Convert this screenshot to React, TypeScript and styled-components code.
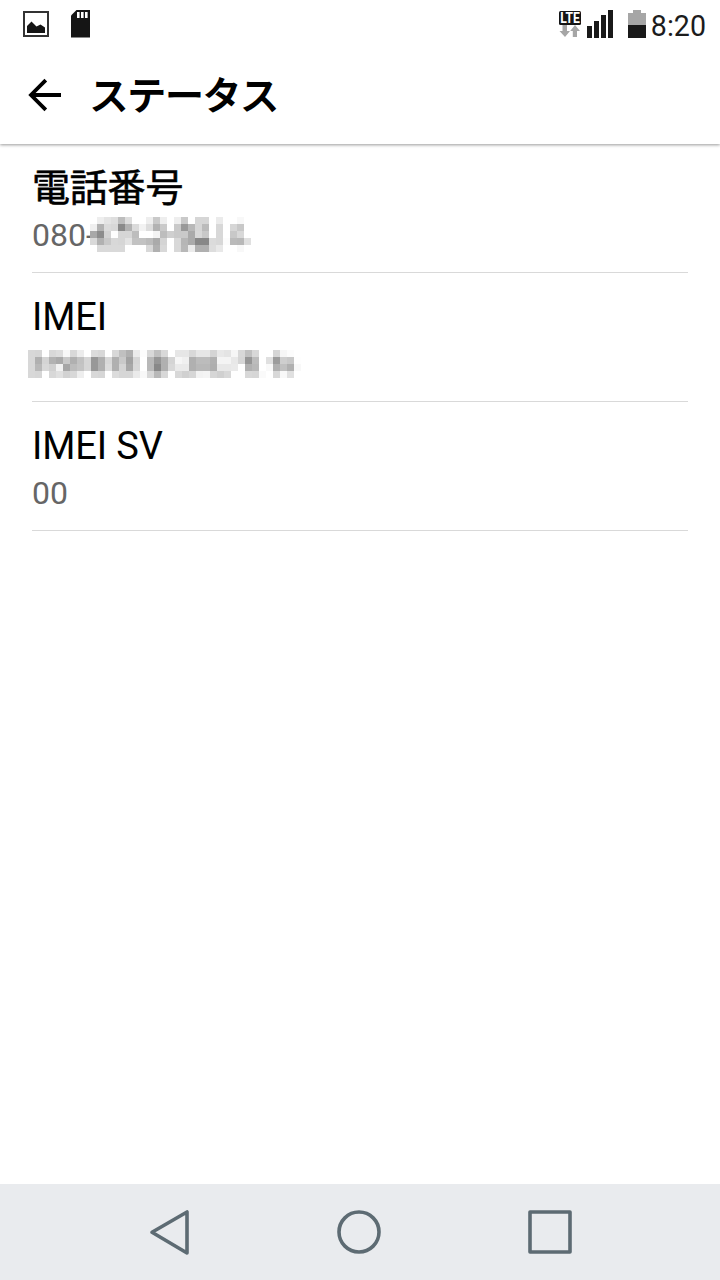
import React from "react";
import styled, { createGlobalStyle } from "styled-components";

const GlobalStyle = createGlobalStyle`
  * { box-sizing: border-box; }
  body { margin: 0; background: #fff; }
`;

const Screen = styled.div`
  display: flex;
  flex-direction: column;
  width: 720px;
  height: 1280px;
  overflow: hidden;
  background: #fff;
  font-family: Roboto, "Noto Sans CJK JP", sans-serif;
  color: #000;
`;

const TopArea = styled.header`
  flex: none;
  height: 144px;
  background: #fff;
  box-shadow: 0 1px 3px rgba(0, 0, 0, 0.4);
`;

const StatusBar = styled.div`
  display: flex;
  justify-content: space-between;
  height: 48px;
  padding: 0 14px 0 22px;
`;

const StatusGroup = styled.div`
  display: flex;
  align-items: flex-start;
`;

const Clock = styled.time`
  margin-left: 3px;
  font-size: 28.6px;
  line-height: 34px;
  padding-top: 9px;
  color: #1c1c1c;
`;

const TitleBar = styled.div`
  display: flex;
  align-items: center;
  height: 96px;
  padding: 0 0 2px 28px;
`;

const Title = styled.h1`
  margin: 2px 0 0 28px;
  font-size: 38px;
  line-height: 48px;
  font-weight: 400;
  letter-spacing: -0.3px;
  -webkit-text-stroke: 1.8px #000;
  stroke-linejoin: round;
`;

const List = styled.main`
  flex: 1;
  padding: 0 32px;
`;

const Row = styled.section`
  height: 129px;
  padding-top: 21px;
  border-bottom: 1px solid #d9d9d9;
`;

const RowTitle = styled.div<{ $cjk?: boolean }>`
  height: 48px;
  font-size: 38px;
  line-height: 46px;
  letter-spacing: ${(p) => (p.$cjk ? "-0.2px" : "-0.1px")};
  -webkit-text-stroke: ${(p) => (p.$cjk ? "0.6px #000" : "0")};
`;

const RowValue = styled.div`
  display: flex;
  height: 44px;
  font-size: 32px;
  line-height: 44px;
  color: #666;
`;

const MosaicSvg = styled.svg<{ $left: number; $top: number }>`
  flex: none;
  display: block;
  margin-left: ${(p) => p.$left}px;
  margin-top: ${(p) => p.$top}px;
`;

const NavBar = styled.nav`
  flex: none;
  display: flex;
  align-items: center;
  height: 96px;
  padding-left: 148px;
  background: #e9ebee;
`;

const NavIcon = styled.svg<{ $gap?: number }>`
  display: block;
  margin-left: ${(p) => p.$gap ?? 0}px;
  fill: none;
  stroke: #5d6b73;
  stroke-width: 3.6;
  stroke-linejoin: round;
`;

const CELL = 7;

const phoneCells = [
  "ff ff ee e4 de bd dd ff ff ee c9 ee ff ee c9 ff d6 d6 ff eb ff ff f8 ff",
  "ff ef b2 db d8 8a b2 db f2 dd b2 ca ff c9 99 b8 d6 bb ff d8 ff d6 c8 ff",
  "ff a8 8c d3 fe d6 d6 bd ff ff f3 bd cf c9 c9 aa d8 c9 ff d8 ff c8 d8 ff",
  "ff d9 b1 c8 d8 d6 e3 c2 c2 bb aa d4 ff d8 b6 aa 88 88 db d8 fc ba b8 e0",
  "ff ff d9 d9 d9 d9 ff ff ff d8 b0 d8 ff d8 b8 eb b0 b0 dd e8 ff ff f8 ff",
];

const imeiCells = [
  "d8 d6 ff d8 dd f8 d8 ec ff dc d8 ff d8 c0 b0 eb fc d8 c0 d8 ff e6 e6 d8 e6 e6 d4 e8 e4 f6 d8 c0 d8 ff ff d6 f6 fc ff",
  "d8 b0 d4 b2 aa c9 b0 c2 d6 98 b0 d8 b0 c9 a2 d6 ff b8 96 b0 d4 f6 f0 b0 bc bc b0 f4 f4 e8 d6 96 bc ff e0 9c ce c8 fe",
  "d8 b8 d8 d0 f2 a6 bc c4 d6 98 b0 dc b0 d4 a8 d8 ff b8 88 b0 d8 ea ea b0 b8 b8 ae e8 e8 ea ff b0 b8 ff f9 b0 c0 b0 f8",
  "d8 d6 ff d8 e0 d2 d8 ee ff d8 d6 ff dc d6 d6 ea f8 d8 b8 d8 ff d8 d0 d6 f2 f4 d6 d0 d8 ff ff d8 d6 fa ff d8 f8 e0 ff",
];

type MosaicProps = { rows: string[]; left: number; top: number };

function Mosaic({ rows, left, top }: MosaicProps) {
  const cells = rows.map((r) => r.split(" "));
  return (
    <MosaicSvg
      $left={left}
      $top={top}
      width={cells[0].length * CELL}
      height={cells.length * CELL}
      shapeRendering="crispEdges"
      aria-hidden
    >
      {cells.map((row, y) =>
        row.map((c, x) =>
          x === 0 && c === "ff" ? null : (
            <rect key={`${x}-${y}`} x={x * CELL} y={y * CELL} width={CELL} height={CELL} fill={`#${c}${c}${c}`} />
          )
        )
      )}
    </MosaicSvg>
  );
}

function NotificationIcons() {
  return (
    <svg width="70" height="48" aria-hidden>
      <rect x="2" y="12" width="24" height="24" fill="none" stroke="#333" strokeWidth="2" />
      <path d="M5 33V26L9.5 21.5L14.5 26.5L18.5 24.5L23 27.5V33Z" fill="#151515" />
      <path d="M54.5 10H68V37.5H49V15.5Z" fill="#151515" />
      <path d="M55 12h2.6v6H55zM59 12h2.6v6H59zM63 12h2.6v6H63z" fill="#fff" />
    </svg>
  );
}

function SystemIcons() {
  return (
    <svg width="90" height="48" aria-hidden>
      <rect x="1" y="11" width="22" height="14" rx="1.5" fill="#151515" />
      <text x="2.2" y="23.2" textLength="19.6" lengthAdjust="spacingAndGlyphs" fontSize="14.6" fontWeight="700" fontFamily="Roboto, sans-serif" fill="#fff">
        LTE
      </text>
      <path d="M4.5 25H9V31H12L7 37L1.5 31H4.5Z" fill="#a6a6a6" />
      <path d="M14.8 37H19V31H22L17 25L12.2 31H14.8Z" fill="#a6a6a6" />
      <path d="M29 26h5v12h-5zM36 21h5v17h-5zM43 15h5v23h-5zM50 10h5v28h-5z" fill="#191919" />
      <path d="M70 13H75V10H83V13H88V25H70Z" fill="#a6a6a6" />
      <rect x="70" y="25" width="18" height="13" fill="#191919" />
    </svg>
  );
}

export default function App() {
  return (
    <>
      <GlobalStyle />
      <Screen>
        <TopArea>
          <StatusBar>
            <StatusGroup>
              <NotificationIcons />
            </StatusGroup>
            <StatusGroup>
              <SystemIcons />
              <Clock>8:20</Clock>
            </StatusGroup>
          </StatusBar>
          <TitleBar>
            <svg width="34" height="34" aria-hidden>
              <path d="M17.8 2.2L3 17L17.8 31.8M2.5 17H33" fill="none" stroke="#000" strokeWidth="3.8" />
            </svg>
            <Title>ステータス</Title>
          </TitleBar>
        </TopArea>
        <List>
          <Row>
            <RowTitle $cjk>電話番号</RowTitle>
            <RowValue>
              080-
              <Mosaic rows={phoneCells} left={-12} top={4} />
            </RowValue>
          </Row>
          <Row>
            <RowTitle>IMEI</RowTitle>
            <RowValue>
              <Mosaic rows={imeiCells} left={-4} top={8} />
            </RowValue>
          </Row>
          <Row>
            <RowTitle>IMEI SV</RowTitle>
            <RowValue>00</RowValue>
          </Row>
        </List>
        <NavBar>
          <NavIcon width="44" height="48">
            <path d="M39 4V45L4 24.3Z" />
          </NavIcon>
          <NavIcon $gap={143} width="48" height="48">
            <circle cx="24" cy="24" r="20" />
          </NavIcon>
          <NavIcon $gap={143} width="48" height="48">
            <rect x="4" y="4" width="40" height="40" />
          </NavIcon>
        </NavBar>
      </Screen>
    </>
  );
}
